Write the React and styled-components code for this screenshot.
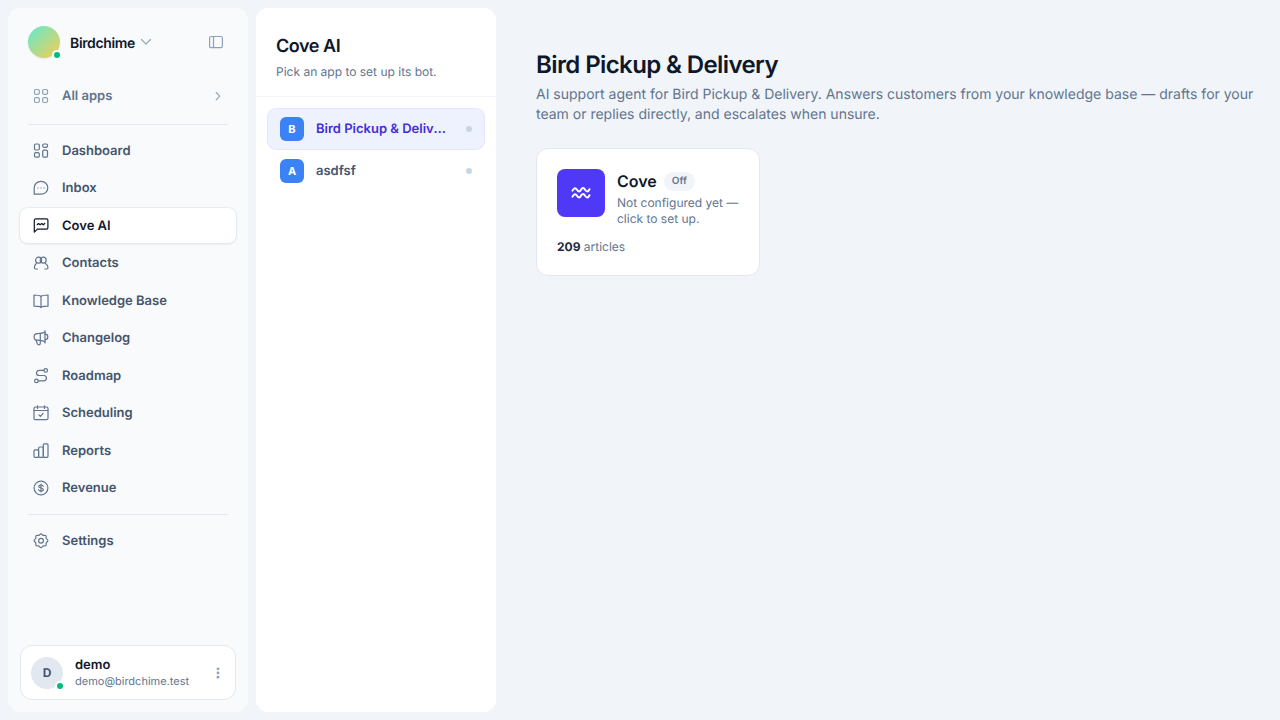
import styled, { createGlobalStyle } from "styled-components";

const navItems = [
  { label: "Dashboard", icon: "dashboard" },
  { label: "Inbox", icon: "inbox" },
  { label: "Cove AI", icon: "cove", active: true },
  { label: "Contacts", icon: "contacts" },
  { label: "Knowledge Base", icon: "book" },
  { label: "Changelog", icon: "megaphone" },
  { label: "Roadmap", icon: "route" },
  { label: "Scheduling", icon: "calendar" },
  { label: "Reports", icon: "bars" },
  { label: "Revenue", icon: "dollar" },
];

const apps = [
  { name: "Bird Pickup & Delivery", letter: "B", active: true },
  { name: "asdfsf", letter: "A" },
];

const icons = {
  grid: <>
    <rect x="2.5" y="2.5" width="4.8" height="4.8" rx="1.2" />
    <rect x="10.7" y="2.5" width="4.8" height="4.8" rx="1.2" />
    <rect x="2.5" y="10.7" width="4.8" height="4.8" rx="1.2" />
    <rect x="10.7" y="10.7" width="4.8" height="4.8" rx="1.2" />
  </>,
  dashboard: <>
    <rect x="2.5" y="2" width="4.8" height="6" rx="1.2" />
    <rect x="10.7" y="2" width="4.8" height="3.3" rx="1.2" />
    <rect x="2.5" y="10.700" width="4.8" height="4.5" rx="1.2" />
    <rect x="10.7" y="8.200" width="4.8" height="7" rx="1.2" />
  </>,
  inbox: <>
    <path d="M2.2 15.2V9C2.2 5.2 5.2 2.4 9 2.4s6.8 2.7 6.8 6.4-3 6.4-6.8 6.4z" />
    <path d="M5.7 9h.6M8.7 9h.6M11.7 9h.6" opacity=".7" />
  </>,
  cove: <>
    <path d="M2.3 15.2V3.3c0-.8.6-1.4 1.400-1.400h10.800c.8 0 1.400.6 1.400 1.400v7.400c0 .8-.6 1.400-1.400 1.400H5.400z" />
    <path d="M5.200 7.700l1.300-1.200 1.600 1.300 1.700-1.300 1.500 1.300 1.400-1.300" />
  </>,
  contacts: <>
    <circle cx="6.6" cy="6.2" r="3" />
    <circle cx="11.2" cy="6.2" r="3" />
    <path d="M4.4 9.5c-1.300.8-2 2.400-2 4 0 1 .4 1.500 1.300 1.500h1.800M13.400 9.500c1.500.8 2.600 2.400 2.600 4 0 1-.4 1.500-1.300 1.500h-1.800" />
  </>,
  book: <>
    <path d="M9 4.4C7.6 3.3 5.6 3 2 3v11.200c3.600 0 5.600.2 7 1.200 1.400-1 3.400-1.200 7-1.200V3c-3.600 0-5.600.3-7 1.400z" />
    <path d="M9 4.4v11" />
  </>,
  megaphone: <>
    <path d="M13 1.800v12.100" />
    <path d="M13 3.100C11.100 4.400 9 4.600 5.400 4.600a3.300 3.300 0 0 0 0 6.600c3.600 0 5.700.4 7.600 1.600" />
    <path d="M13 5.200c1.800 0 2.800 1 2.800 2.700s-1 2.700-2.800 2.700M8.300 4.600v9.600c0 1-.6 1.600-1.500 1.600s-1.300-.5-1.600-1.300l-1.100-3.600" />
  </>,
  route: <>
    <circle cx="13.7" cy="3.400" r="1.8" />
    <circle cx="4.400" cy="13.900" r="1.8" />
    <path d="M11.900 3.400H7.200c-1.700 0-2.700 1-2.700 2.500s1 2.600 2.700 2.600h4.500c1.700 0 2.700 1 2.700 2.600s-1 2.800-2.700 2.800H6.200" />
  </>,
  calendar: <>
    <rect x="2" y="3" width="14" height="12.700" rx="1.500" />
    <path d="M2 6.500h14M5.500 1.900v2.600M12.500 1.900v2.600M6.900 10.800l1.500 1.500 2.800-2.900" />
  </>,
  bars: <>
    <rect x="2" y="7.900" width="4.600" height="7.400" rx="1" />
    <rect x="6.600" y="5" width="4.700" height="10.300" rx="1" />
    <rect x="11.300" y="1.900" width="4.700" height="13.400" rx="1" />
  </>,
  dollar: <>
    <circle cx="9" cy="9" r="6.900" />
    <path d="M11.200 7.300c-.2-.8-1-1.300-2.200-1.300s-2.200.5-2.200 1.500S7.700 8.800 9 9s2.300.5 2.300 1.500S10.200 12 9 12s-2.200-.5-2.400-1.400M9 5v8" />
  </>,
  gear: <>
    <circle cx="9" cy="8.700" r="2.400" />
    <path d="M9 1.800c1 0 1.300 1.300 2.200 1.600.9.300 2-.5 2.700.2s-.1 1.800.3 2.700c.4.800 1.700 1.200 1.700 2.300s-1.300 1.500-1.700 2.400.4 2-.3 2.700-1.800-.1-2.700.3S10 15.600 9 15.600s-1.300-1.200-2.200-1.600-2 .4-2.700-.3.100-1.800-.3-2.700S2.100 9.700 2.100 8.600s1.300-1.500 1.700-2.300-.4-2 .3-2.700 1.800.1 2.700-.2S8 1.800 9 1.800z" />
  </>,
};

const Icon = ({ name }) => {
  return <NavSvg viewBox="0 0 18 18" aria-hidden="true">{icons[name]}</NavSvg>;
};

const App = () => {

  return <Layout>
    <GlobalStyle />

    <Sidebar>
      <OrgHeader>
        <OrgButton type="button">
          <OrgAvatar><StatusDot $ring="#f8fafc" /></OrgAvatar>
          <OrgName>Birdchime</OrgName>
          <Chevron viewBox="0 0 12 12" aria-hidden="true"><path d="M1.5 3.5L6 8.2l4.5-4.7" /></Chevron>
        </OrgButton>
        <IconButton type="button" aria-label="Collapse sidebar">
          <svg width="16" height="16" viewBox="0 0 16 16" aria-hidden="true">
            <rect x="1.6" y="2.5" width="12.8" height="11.2" rx="1.5" />
            <path d="M5.5 2.5v11.2" />
          </svg>
        </IconButton>
      </OrgHeader>

      <Nav aria-label="Main">
        <NavLink href="#all" $muted>
          <Icon name="grid" />
          <span>All apps</span>
          <Chevron viewBox="0 0 12 12" aria-hidden="true"><path d="M4.2 2.5l3.600 3.700-3.600 3.700" /></Chevron>
        </NavLink>
        <Divider />
        <NavList>
          {navItems.map((item) => (
            <li key={item.label}>
              <NavLink href="#" $active={item.active} aria-current={item.active ? "page" : undefined}>
                <Icon name={item.icon} />
                <span>{item.label}</span>
              </NavLink>
            </li>
          ))}
        </NavList>
        <Divider />
        <NavLink href="#settings">
          <Icon name="gear" />
          <span>Settings</span>
        </NavLink>
      </Nav>

      <UserCard type="button">
        <UserAvatar>D<StatusDot $ring="#ffffff" /></UserAvatar>
        <UserInfo>
          <UserName>demo</UserName>
          <UserEmail>demo@birdchime.test</UserEmail>
        </UserInfo>
        <Kebab viewBox="0 0 14 14" aria-hidden="true">
          <circle cx="7" cy="2.8" r="1.4" />
          <circle cx="7" cy="7" r="1.4" />
          <circle cx="7" cy="11.2" r="1.4" />
        </Kebab>
      </UserCard>
    </Sidebar>

    <AppPanel>
      <PanelHeader>
        <PanelTitle>Cove AI</PanelTitle>
        <SmallText>Pick an app to set up its bot.</SmallText>
      </PanelHeader>
      <AppList>
        {apps.map((app) => (
          <li key={app.name}>
            <AppButton type="button" $active={app.active}>
              <AppLetter>{app.letter}</AppLetter>
              <AppName>{app.name}</AppName>
              <AppDot />
            </AppButton>
          </li>
        ))}
      </AppList>
    </AppPanel>

    <Main>
      <Title>Bird Pickup &amp; Delivery</Title>
      <Lead>AI support agent for Bird Pickup &amp; Delivery. Answers customers from your knowledge base — drafts for your team or replies directly, and escalates when unsure.</Lead>
      <Cards>
        <Card href="#cove">
          <CardTop>
            <CardLogo>
              <svg width="24" height="24" viewBox="0 0 24 24" aria-hidden="true">
                <path d="M3.5 9.700c1.500-3.200 3-3.200 4.500-.9 1.500 2.300 2.700 2.300 4 0s2.700-2.300 4.100 0c1.500 2.300 3 2.300 4.400-.6" />
                <path d="M3.500 15.700c1.500-3.200 3-3.200 4.500-.9 1.500 2.300 2.700 2.300 4 0s2.700-2.300 4.100 0c1.500 2.300 3 2.300 4.400-.6" />
              </svg>
            </CardLogo>
            <div>
              <CardHeading>
                <CardTitle>Cove</CardTitle>
                <Badge>Off</Badge>
              </CardHeading>
              <SmallText>Not configured yet — click to set up.</SmallText>
            </div>
          </CardTop>
          <CardStat><strong>209</strong> articles</CardStat>
        </Card>
      </Cards>
    </Main>
  </Layout>;
};

export default App;

const GlobalStyle = createGlobalStyle`
*, *::before, *::after {
  box-sizing: border-box;
}

body {
  margin: 0;
  background: #f1f5f9;
  color: #0f172b;
  font-family: Inter, "Liberation Sans", sans-serif;
  text-rendering: geometricPrecision;
  -webkit-font-smoothing: antialiased;
}

h1, h2, h3, p, ul {
  margin: 0;
  padding: 0;
}

ul {
  list-style: none;
}

button {
  border: 0;
  padding: 0;
  background: none;
  color: inherit;
  font: inherit;
  text-align: left;
  text-rendering: inherit;
  cursor: pointer;
}

a {
  color: inherit;
  text-decoration: none;
}
`;

const Layout = styled.div`
display: flex;
gap: 8px;
min-height: 100vh;
padding: 8px 0 8px 8px;
`;

const Sidebar = styled.aside`
display: flex;
flex-direction: column;
flex: 0 0 240px;
padding: 12px;
border-radius: 12px;
background: #f8fafc;
`;

const OrgHeader = styled.header`
display: flex;
align-items: center;
justify-content: space-between;
padding: 6px 12px 20px 8px;
`;

const OrgButton = styled.button`
display: flex;
align-items: center;
`;

const OrgAvatar = styled.span`
position: relative;
width: 32px;
height: 32px;
margin-right: 10px;
border-radius: 50%;
background: linear-gradient(135deg, #5eead4, #facc4d);
box-shadow: 0 1px 2px rgba(15, 23, 43, 0.08);
`;

const StatusDot = styled.span`
position: absolute;
right: -2px;
bottom: -2px;
width: 10px;
height: 10px;
border: 2px solid ${({ $ring }) => $ring};
border-radius: 50%;
background: #00bc7d;
`;

const OrgName = styled.span`
margin-right: 5px;
padding-top: 3px;
font-size: 14px;
font-weight: 600;
line-height: 20px;
letter-spacing: -0.025em;
`;

const Chevron = styled.svg`
width: 12px;
height: 12px;
fill: none;
stroke: #90a1b9;
stroke-width: 1.1;
stroke-linecap: round;
stroke-linejoin: round;
`;

const IconButton = styled.button`
display: flex;

svg {
  fill: none;
  stroke: #90a1b9;
  stroke-width: 1.2;
}
`;

const Nav = styled.nav`
display: flex;
flex: 1;
flex-direction: column;
`;

const NavList = styled.ul`
display: flex;
flex-direction: column;
gap: 2px;
`;

const NavSvg = styled.svg`
flex: none;
width: 18px;
height: 18px;
fill: none;
stroke: #62748e;
stroke-width: 1.2;
stroke-linecap: round;
stroke-linejoin: round;
`;

const NavLink = styled.a`
display: flex;
align-items: center;
gap: 12px;
padding: 8px 12px 7px;
border-radius: 8px;
background: ${({ $active }) => ($active ? "#ffffff" : "transparent")};
box-shadow: ${({ $active }) => ($active ? "0 0 0 1px rgba(226, 232, 240, 0.8), 0 1px 3px rgba(15, 23, 43, 0.1)" : "none")};
color: ${({ $active, $muted }) => ($active ? "#0f172b" : $muted ? "#62748e" : "#45556c")};
font-size: 13px;
font-weight: 600;
line-height: 1.5;

span {
  flex: 1;
  padding-top: 1px;
}

${NavSvg} {
  stroke: ${({ $active, $muted }) => ($active ? "#0f172b" : $muted ? "#90a1b9" : "#62748e")};
}
`;

const Divider = styled.hr`
height: 1px;
margin: 8px;
border: 0;
background: #e2e8f0;

&:first-of-type {
  margin-top: 10px;
}
`;

const UserCard = styled.button`
display: flex;
align-items: center;
gap: 12px;
padding: 10px;
border: 1px solid #e2e8f0;
border-radius: 12px;
background: #ffffff;
`;

const UserAvatar = styled.span`
position: relative;
display: flex;
align-items: center;
justify-content: center;
width: 32px;
height: 32px;
border-radius: 50%;
background: #e2e8f0;
color: #45556c;
font-size: 12px;
font-weight: 700;
`;

const UserInfo = styled.span`
display: flex;
flex: 1;
flex-direction: column;
`;

const UserName = styled.span`
font-size: 13px;
font-weight: 600;
line-height: 18px;
`;

const UserEmail = styled.span`
color: #62748e;
font-size: 11px;
line-height: 15px;
`;

const Kebab = styled.svg`
width: 14px;
height: 14px;
fill: #90a1b9;
`;

const AppPanel = styled.section`
flex: 0 0 240px;
min-width: 0;
border-radius: 12px;
background: #ffffff;
`;

const PanelHeader = styled.header`
padding: 25px 20px 16px;
border-bottom: 1px solid #f1f5f9;
`;

const PanelTitle = styled.h2`
margin-bottom: 3px;
font-size: 18px;
font-weight: 600;
line-height: 28px;
letter-spacing: -0.025em;
`;

const SmallText = styled.p`
color: #62748e;
font-size: 12px;
line-height: 16px;
`;

const AppList = styled.ul`
display: flex;
flex-direction: column;
gap: 2px;
padding: 12px;
`;

const AppButton = styled.button`
display: flex;
align-items: center;
gap: 12px;
width: 100%;
padding: 8px 12px;
border-radius: 8px;
background: ${({ $active }) => ($active ? "#eef2ff" : "transparent")};
box-shadow: ${({ $active }) => ($active ? "0 0 0 1px #e0e7ff" : "none")};
color: ${({ $active }) => ($active ? "#432dd7" : "#45556c")};
`;

const AppLetter = styled.span`
display: flex;
align-items: center;
justify-content: center;
flex: none;
width: 24px;
height: 24px;
border-radius: 6px;
background: #3b82f6;
color: #ffffff;
font-size: 11px;
font-weight: 700;
`;

const AppName = styled.span`
flex: 1;
overflow: hidden;
font-size: 13px;
font-weight: 600;
line-height: 20px;
text-overflow: ellipsis;
white-space: nowrap;
`;

const AppDot = styled.span`
flex: none;
width: 6px;
height: 6px;
margin-left: 4px;
border-radius: 50%;
background: #cad5e2;
`;

const Main = styled.main`
flex: 1;
min-width: 0;
padding: 41px 24px 40px 32px;
`;

const Title = styled.h1`
margin-bottom: 4px;
font-size: 24px;
font-weight: 600;
line-height: 32px;
letter-spacing: -0.025em;
`;

const Lead = styled.p`
margin-bottom: 23px;
color: #62748e;
font-size: 14px;
line-height: 20px;
`;

const Cards = styled.div`
display: grid;
grid-template-columns: repeat(auto-fill, 224px);
gap: 16px;
`;

const Card = styled.a`
padding: 20px;
border: 1px solid #e2e8f0;
border-radius: 12px;
background: #ffffff;
`;

const CardTop = styled.div`
display: flex;
gap: 12px;
margin-bottom: 12px;
`;

const CardLogo = styled.span`
display: flex;
align-items: center;
justify-content: center;
flex: none;
width: 48px;
height: 48px;
border-radius: 8px;
background: #4f39f6;

svg {
  fill: none;
  stroke: #ffffff;
  stroke-width: 2;
  stroke-linecap: round;
}
`;

const CardHeading = styled.div`
display: flex;
align-items: center;
gap: 7px;
margin-bottom: 2px;
`;

const CardTitle = styled.h3`
font-size: 16px;
font-weight: 600;
line-height: 24px;
`;

const Badge = styled.span`
padding: 2px 8px;
border-radius: 10px;
background: #f1f5f9;
color: #62748e;
font-size: 10px;
font-weight: 600;
line-height: 15px;
`;

const CardStat = styled.p`
color: #62748e;
font-size: 12px;
line-height: 16px;

strong {
  color: #1d293d;
  font-weight: 700;
}
`;
